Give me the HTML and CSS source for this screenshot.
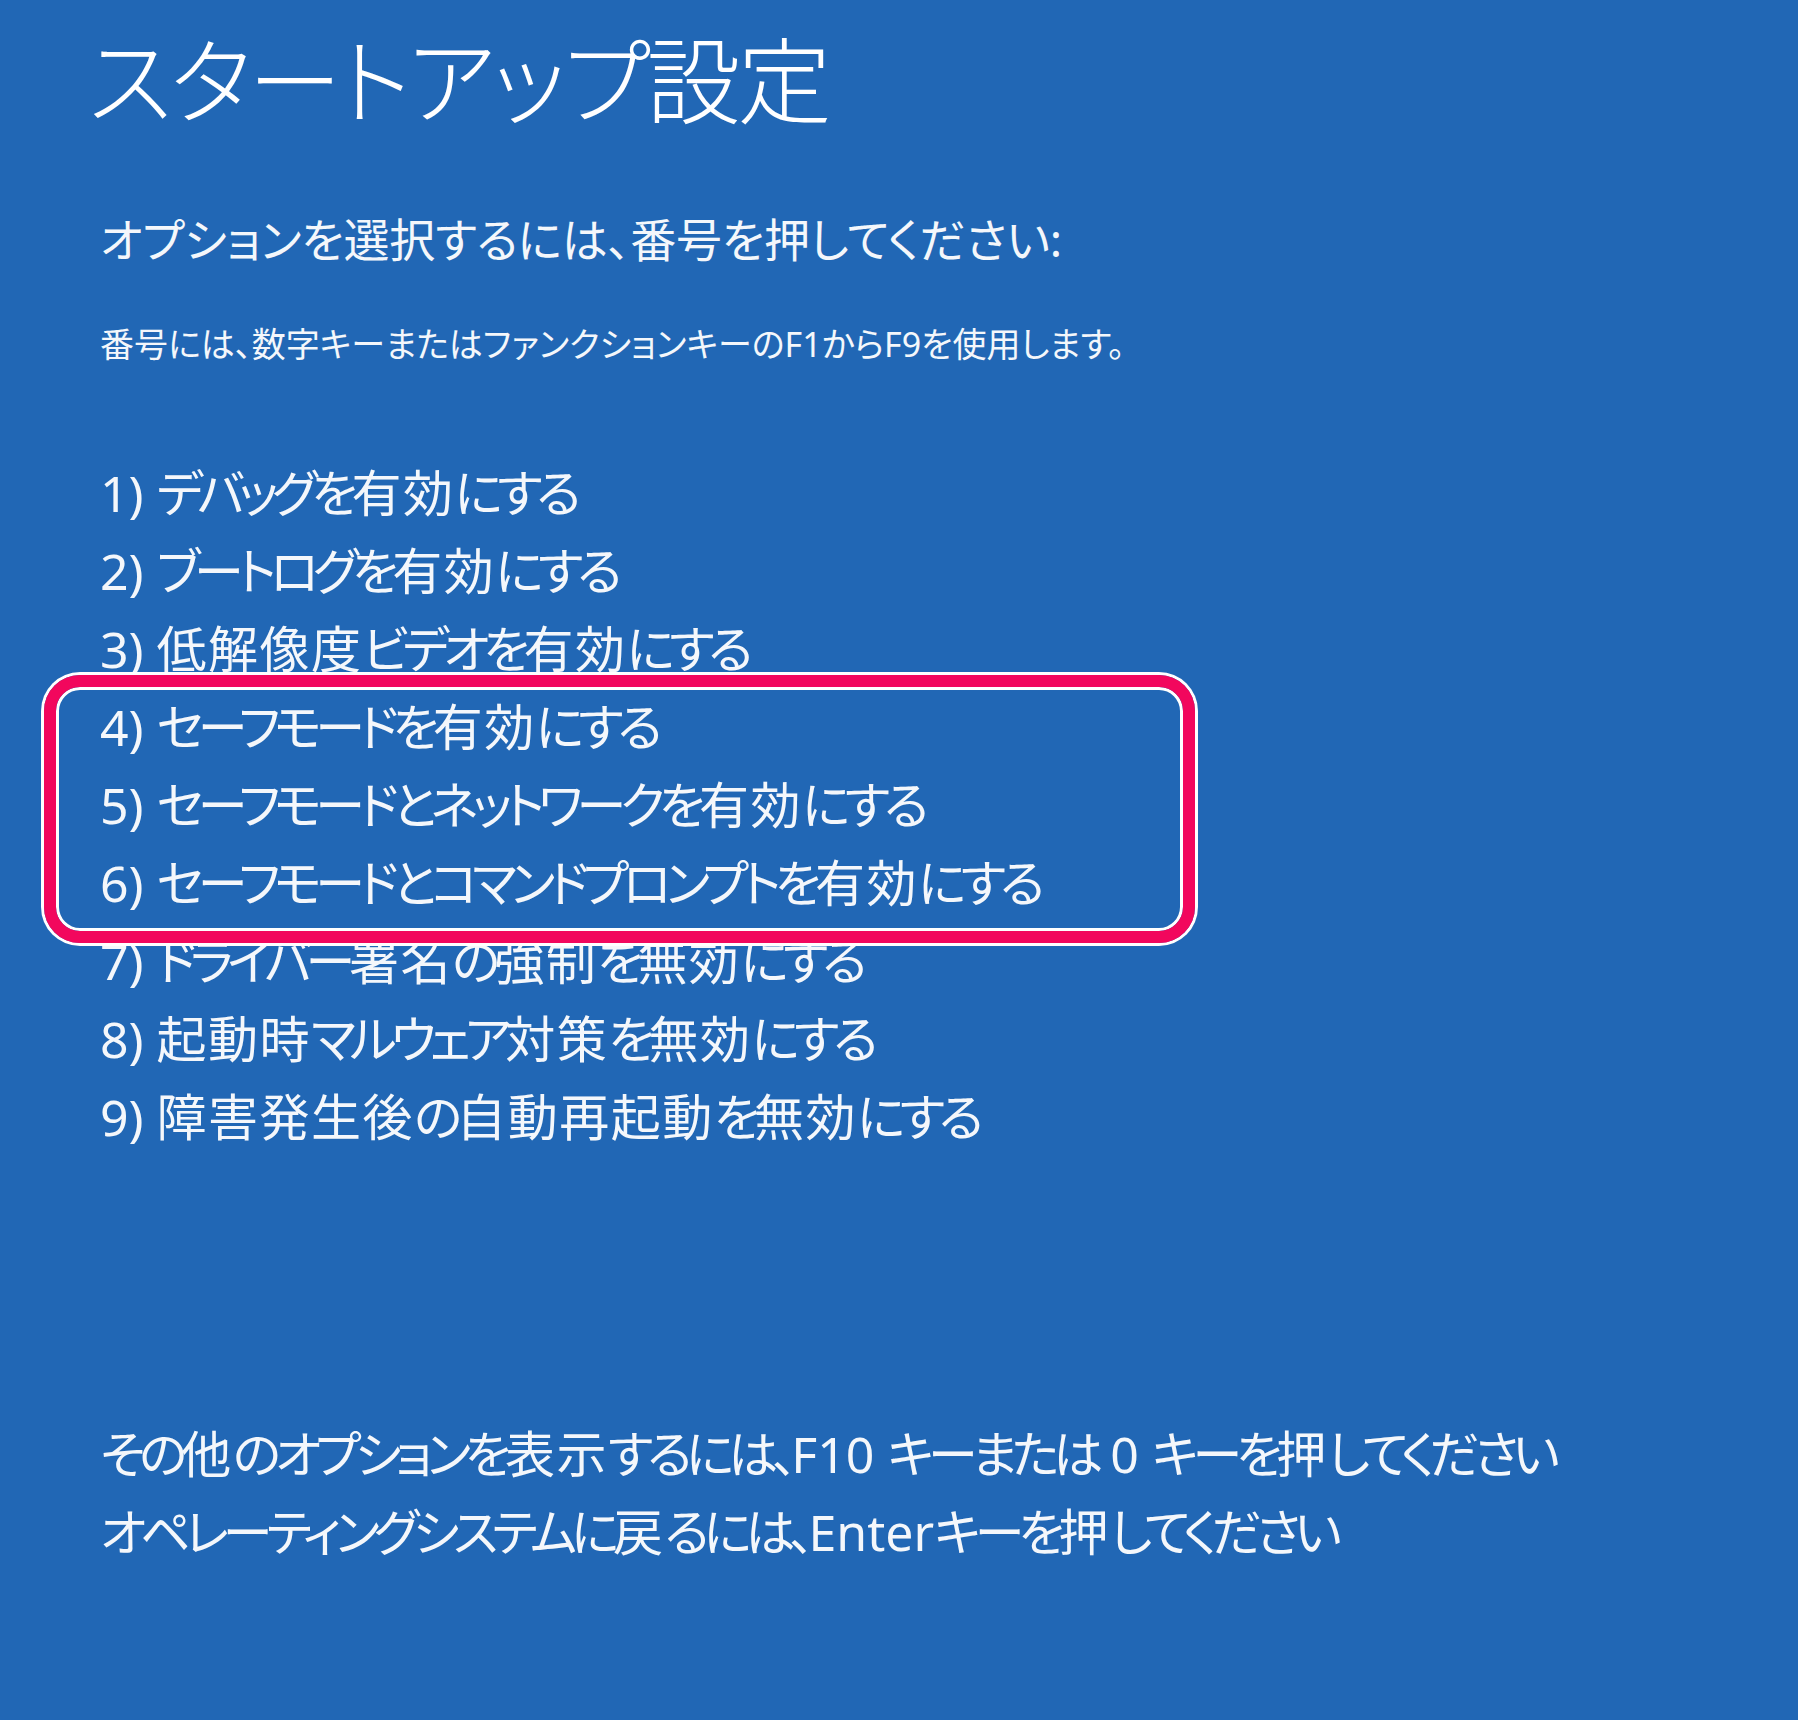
FILE: index.html
```html
<!DOCTYPE html>
<html lang="ja">
<head>
<meta charset="utf-8">
<title>スタートアップ設定</title>
<link rel="stylesheet" href="styles.css">
</head>
<body>
<main class="screen">
  <h1 class="title">スタートアップ設定</h1>
  <p class="prompt">オプションを選択するには、番号を押してください:</p>
  <p class="hint">番号には、数字キーまたはファンクションキーのF1からF9を使用します。</p>
  <ol class="options">
    <li class="option"><span class="key">1)</span> <span class="label">デバッグを<span class="k">有効</span>にする</span></li>
    <li class="option"><span class="key">2)</span> <span class="label">ブートログを<span class="k">有効</span>にする</span></li>
    <li class="option"><span class="key">3)</span> <span class="label"><span class="k">低解像度</span>ビデオを<span class="k">有効</span>にする</span></li>
    <li class="group">
      <ol class="options">
        <li class="option"><span class="key">4)</span> <span class="label">セーフモードを<span class="k">有効</span>にする</span></li>
        <li class="option"><span class="key">5)</span> <span class="label">セーフモードとネットワークを<span class="k">有効</span>にする</span></li>
        <li class="option"><span class="key">6)</span> <span class="label">セーフモードとコマンドプロンプトを<span class="k">有効</span>にする</span></li>
      </ol>
    </li>
    <li class="option"><span class="key">7)</span> <span class="label">ドライバー<span class="k">署名</span>の<span class="k">強制</span>を<span class="k">無効</span>にする</span></li>
    <li class="option"><span class="key">8)</span> <span class="label"><span class="k">起動時</span>マルウェア<span class="k">対策</span>を<span class="k">無効</span>にする</span></li>
    <li class="option"><span class="key">9)</span> <span class="label"><span class="k">障害発生後</span>の<span class="k">自動再起動</span>を<span class="k">無効</span>にする</span></li>
  </ol>
  <div class="footer">
    <p class="line">その<span class="k">他</span>のオプションを<span class="k">表示</span>するには、<span class="lat">F10 </span>キーまたは<span class="lat"> 0 </span>キーを<span class="k">押</span>してください</p>
    <p class="line">オペレーティングシステムに<span class="k">戻</span>るには、<span class="lat">Enter</span>キーを<span class="k">押</span>してください</p>
  </div>
</main>
</body>
</html>
```

FILE: styles.css
```css
html, body {
  margin: 0;
  padding: 0;
  background: #2167b5;
}

body {
  width: 1798px;
  height: 1720px;
  overflow: hidden;
  font-family: "Noto Sans", "Noto Sans CJK JP", sans-serif;
  font-feature-settings: "palt";
  color: #f4f7fb;
}

.screen {
  padding: 21px 0 0 100px;
}

.title {
  margin: 0 0 0 -12px;
  font-size: 94px;
  line-height: 120px;
  font-weight: 300;
  letter-spacing: -3px;
  color: #ffffff;
}

.prompt {
  margin: 68px 0 0 0;
  font-size: 46px;
  line-height: 60px;
  font-weight: 400;
  letter-spacing: -0.2px;
}

.hint {
  margin: 50px 0 0 0;
  font-size: 34px;
  line-height: 50px;
}

.options {
  list-style: none;
  margin: 0;
  padding: 0;
}

.screen > .options {
  margin-top: 85px;
}

.option {
  font-size: 50px;
  line-height: 78px;
  white-space: nowrap;
}

.label {
  letter-spacing: -6px;
}

.k {
  letter-spacing: 1.5px;
}

.lat {
  letter-spacing: 0;
}

.group {
  position: relative;
}

.group::before {
  content: "";
  position: absolute;
  top: -13px;
  bottom: -21px;
  left: -56px;
  width: 1151px;
  box-sizing: border-box;
  border: 12px solid #f2075d;
  border-radius: 36px;
  box-shadow: 0 0 0 3px #ffffff, inset 0 0 0 3px #ffffff;
  pointer-events: none;
}

.footer {
  margin-top: 259px;
}

.line {
  margin: 0;
  font-size: 50px;
  line-height: 78px;
  letter-spacing: -6px;
  white-space: nowrap;
}
```
